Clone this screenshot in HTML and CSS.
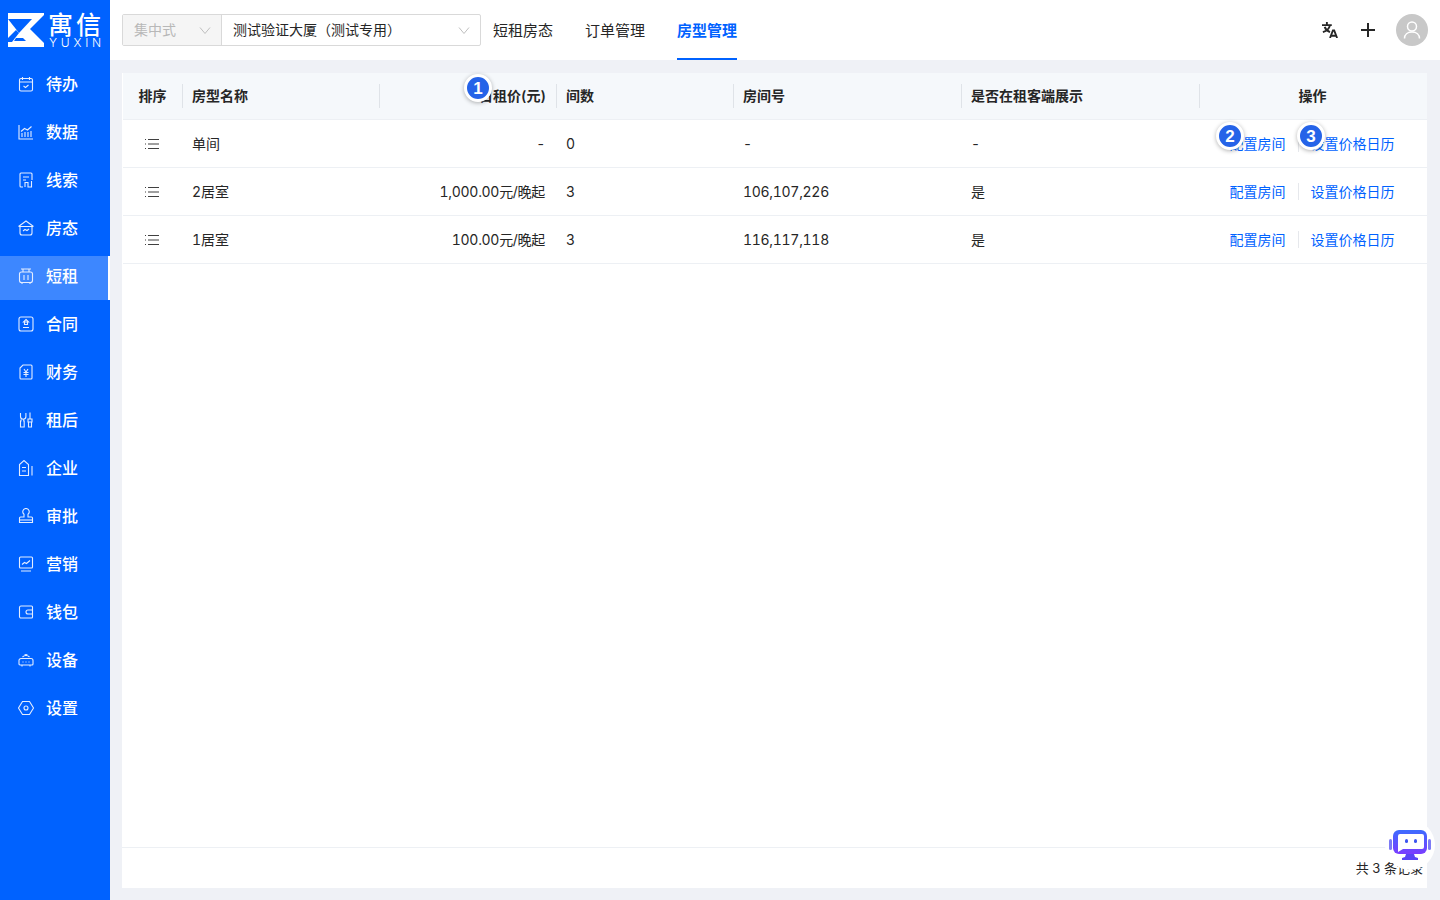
FILE: index.html
```html
<!DOCTYPE html>
<html lang="zh">
<head>
    <meta charset="UTF-8">
    <title>房型管理</title>
    <link rel="stylesheet" href="styles.css">
</head>
<body>
    <aside class="sidebar">
        <div class="logo">
            <svg class="logo-mark" width="36" height="34" viewBox="0 0 36 34">
                <rect width="36" height="34" fill="#fff"/>
                <path d="M0 6H24L11 20Z" fill="#0062ff"/>
                <path d="M0 9L8 17L0 25Z" fill="#fff"/>
                <path d="M0 25L8 17L11 20L4 29H0Z" fill="#0062ff"/>
                <path d="M36 2V30L22 16Z" fill="#0062ff"/>
                <path d="M8 25H15L18 28H6Z" fill="#0062ff"/>
            </svg>
            <div class="logo-text">
                <div class="logo-cn">寓信</div>
                <div class="logo-en">YUXIN</div>
            </div>
        </div>
        <nav class="menu">
            <a class="menu-item"><svg viewBox="0 0 16 16"><rect x="1.500" y="2.500" width="13" height="12.500" rx="1.500"/><path d="M1.500 6h13M4.500 1v3M11.500 1v3M5.500 10l2 1.500 3-2.500"/></svg>待办</a>
            <a class="menu-item"><svg viewBox="0 0 16 16"><path d="M1 1v14h14M4 13V9M7 13V8M10 13V8M13 13V7M3 7.500l3.500-3 3 1.500 4-3.500"/></svg>数据</a>
            <a class="menu-item"><svg viewBox="0 0 16 16"><path d="M5 15H3a1 1 0 0 1-1-1V2a1 1 0 0 1 1-1h10a1 1 0 0 1 1 1v6M5 5h6M5 8h3M7 15v-4.500h3V15h3.500V9"/></svg>线索</a>
            <a class="menu-item"><svg viewBox="0 0 16 16"><path d="M.5 6.500L8 1l7.500 5.500M2 6.500h12v6.500a2 2 0 0 1-2 2H4a2 2 0 0 1-2-2zM5 11l2-1.500 2 1 2-1.500"/></svg>房态</a>
            <a class="menu-item active"><svg viewBox="0 0 16 16"><path d="M3 1h10M5 1v3M11 1v3"/><rect x="1.500" y="4" width="13" height="10.500" rx="2"/><path d="M6 7v5M10 7v5M4 14.500V16M12 14.500V16"/></svg>短租</a>
            <a class="menu-item"><svg viewBox="0 0 16 16"><rect x="1" y="1" width="14" height="14" rx="2"/><path d="M8 3.500l2.500 2.500h-5zM6.500 6v2.500h3V6M5 11.500h6"/></svg>合同</a>
            <a class="menu-item"><svg viewBox="0 0 16 16"><path d="M5 1h8a1 1 0 0 1 1 1v12a1 1 0 0 1-1 1H3a1 1 0 0 1-1-1V4zM6 5l2 3 2-3M5.500 8.500h5M5.500 10.500h5M8 8v5"/></svg>财务</a>
            <a class="menu-item"><svg viewBox="0 0 16 16"><path d="M2.500 1v3.500a2.700 2.700 0 0 0 5.400 0V1M3 7.500V9h-.5v6h3.700V9h-.5V7.500M12 .5V7M10 7h4v3h-4zM10.500 10h3v5h-3z"/></svg>租后</a>
            <a class="menu-item"><svg viewBox="0 0 16 16"><path d="M1.500 15.500V4.500L6 .5l4.500 4v11zM4 7.500h4M4 11h4M14 6v9.500"/></svg>企业</a>
            <a class="menu-item"><svg viewBox="0 0 16 16"><path d="M8 .5a3.200 3.200 0 0 1 2 5.700V9h3.500a1 1 0 0 1 1 1v4.500h-13V10a1 1 0 0 1 1-1H6V6.200A3.200 3.200 0 0 1 8 .5z"/><path d="M1.500 12h13"/></svg>审批</a>
            <a class="menu-item"><svg viewBox="0 0 16 16"><rect x="1.500" y="1" width="13" height="11" rx="1"/><path d="M4 8.500l2.500-2 2 1 3.500-3M3 15h10"/></svg>营销</a>
            <a class="menu-item"><svg viewBox="0 0 16 16"><path d="M14.500 4.500V3a1 1 0 0 0-1-1H3a1.500 1.500 0 0 0-1.500 1.500v9A1.500 1.500 0 0 0 3 14h10.500a1 1 0 0 0 1-1V4.500z"/><path d="M14.500 6H10a2 2 0 0 0 0 4h4.500"/></svg>钱包</a>
            <a class="menu-item"><svg viewBox="0 0 16 16"><path d="M3 6.500h10a2 2 0 0 1 2 2V12a1 1 0 0 1-1 1H2a1 1 0 0 1-1-1V8.500a2 2 0 0 1 2-2zM4 13v1.500M12 13v1.500M4.500 10h1M7.500 10h1M10.500 10h1M4.500 5a5 5 0 0 1 7 0M6.500 3a3.500 3.500 0 0 1 3 0"/></svg>设备</a>
            <a class="menu-item"><svg viewBox="0 0 16 16"><path d="M4.500 1.500h7L15.500 8l-4 6.500h-7L.5 8z"/><circle cx="8" cy="8" r="2"/></svg>设置</a>
        </nav>
    </aside>

    <div class="main">
        <header class="topbar">
            <div class="picker">
                <div class="picker-type"><span>集中式</span><svg class="chev" viewBox="0 0 12 12"><path d="M1 3.500l5 6 5-6"/></svg></div>
                <div class="picker-building"><span>测试验证大厦（测试专用）</span><svg class="chev" viewBox="0 0 12 12"><path d="M1 3.500l5 6 5-6"/></svg></div>
            </div>
            <nav class="tabs">
                <a class="tab">短租房态</a>
                <a class="tab">订单管理</a>
                <a class="tab current">房型管理</a>
            </nav>
            <div class="top-actions">
                <svg class="translate-icon" width="16" height="16" viewBox="0 0 18 18" fill="none" stroke="#262626" stroke-width="2.100">
                    <path d="M0 3.500h11M5.500 0v3.500M9 3.500c-.8 3.800-3.400 6.500-8 8M3 5.500c1 2.800 3 4.800 6 6"/>
                    <path d="M9 18l3.300-8.500h1.400L17 18M10.300 15.500h5.400"/>
                </svg>
                <svg class="plus-icon" width="16" height="16" viewBox="0 0 16 16" stroke="#262626" stroke-width="2"><path d="M8 1v14M1 8h14"/></svg>
                <div class="avatar">
                    <svg width="20" height="20" viewBox="0 0 20 20" fill="none" stroke="#fff" stroke-width="1.500"><circle cx="10" cy="6.500" r="4.500"/><path d="M2.500 18.500c0-4 3-6.500 7.500-6.500s7.500 2.500 7.500 6.500"/></svg>
                </div>
            </div>
        </header>

        <section class="card">
            <table class="room-table">
                <colgroup>
                    <col class="c-sort"><col class="c-name"><col class="c-price"><col class="c-count"><col class="c-room"><col class="c-show"><col class="c-ops">
                </colgroup>
                <thead>
                    <tr>
                        <th class="center"><span class="th-in">排序</span></th>
                        <th><span class="th-in">房型名称</span></th>
                        <th class="right"><span class="th-in">日租价(元)</span></th>
                        <th><span class="th-in">间数</span></th>
                        <th><span class="th-in">房间号</span></th>
                        <th><span class="th-in">是否在租客端展示</span></th>
                        <th class="center"><span class="th-in last">操作</span></th>
                    </tr>
                </thead>
                <tbody>
                    <tr>
                        <td class="center"><svg class="drag" viewBox="0 0 14 10"><path d="M3 .5h11M3 5h11M3 9.500h11M0 .5h1M0 5h1M0 9.500h1"/></svg></td>
                        <td>单间</td>
                        <td class="right num">-</td>
                        <td>0</td>
                        <td class="num">-</td>
                        <td>-</td>
                        <td class="center ops"><a class="op">配置房间</a><a class="op">设置价格日历</a></td>
                    </tr>
                    <tr>
                        <td class="center"><svg class="drag" viewBox="0 0 14 10"><path d="M3 .5h11M3 5h11M3 9.500h11M0 .5h1M0 5h1M0 9.500h1"/></svg></td>
                        <td>2居室</td>
                        <td class="right num">1,000.00元/晚起</td>
                        <td>3</td>
                        <td class="num">106,107,226</td>
                        <td>是</td>
                        <td class="center ops"><a class="op">配置房间</a><a class="op">设置价格日历</a></td>
                    </tr>
                    <tr>
                        <td class="center"><svg class="drag" viewBox="0 0 14 10"><path d="M3 .5h11M3 5h11M3 9.500h11M0 .5h1M0 5h1M0 9.500h1"/></svg></td>
                        <td>1居室</td>
                        <td class="right num">100.00元/晚起</td>
                        <td>3</td>
                        <td class="num">116,117,118</td>
                        <td>是</td>
                        <td class="center ops"><a class="op">配置房间</a><a class="op">设置价格日历</a></td>
                    </tr>
                </tbody>
            </table>
            <footer class="pager">共 3 条记录</footer>
        </section>
    </div>

    <span class="step step-1">1</span>
    <span class="step step-2">2</span>
    <span class="step step-3">3</span>

    <div class="robot">
        <svg width="42" height="32" viewBox="0 0 42 32">
            <defs>
                <linearGradient id="robotFill" x1="0" y1="0" x2="0" y2="1">
                    <stop offset="0" stop-color="#3d6bff"/>
                    <stop offset="1" stop-color="#7a3dff"/>
                </linearGradient>
            </defs>
            <rect x="0" y="10" width="3" height="11" rx="1.500" fill="#7d7bf5"/>
            <rect x="39" y="10" width="3" height="11" rx="1.500" fill="#7d7bf5"/>
            <rect x="4" y="1" width="34" height="24" rx="6" fill="url(#robotFill)"/>
            <path d="M11 5h22a2 2 0 0 1 2 2v11a2 2 0 0 1-2 2H14l-5 3V7a2 2 0 0 1 2-2z" fill="#fff"/>
            <rect x="16" y="10" width="3" height="4" rx="1.500" fill="#3d55f0"/>
            <rect x="25" y="10" width="3" height="4" rx="1.500" fill="#3d55f0"/>
            <path d="M17 25h8l1 3 3 1v2H13v-2l3-1z" fill="#5a45f5"/>
        </svg>
    </div>
</body>
</html>
```

FILE: styles.css
```css
* {
    margin: 0;
    padding: 0;
    box-sizing: border-box;
}
html, body {
    height: 100%;
}
body {
    display: flex;
    height: 900px;
    overflow: hidden;
    background: #eff1f6;
    font-family: Inter, "Noto Sans CJK SC", sans-serif;
    font-size: 14px;
    color: #262626;
}
.sidebar {
    width: 110px;
    flex-shrink: 0;
    background: #0062ff;
    color: #fff;
}
.logo {
    height: 60px;
    display: flex;
    align-items: center;
    padding-left: 8px;
    gap: 4px;
}
.logo-mark {
    flex-shrink: 0;
}
.logo-cn {
    font-size: 25px;
    line-height: 24px;
    font-weight: 500;
    letter-spacing: 3px;
    white-space: nowrap;
}
.logo-en {
    font-size: 12px;
    line-height: 10px;
    letter-spacing: 3.800px;
    font-weight: 300;
    margin-top: 1px;
    padding-left: 1px;
}
.menu-item {
    height: 44px;
    margin-top: 4px;
    padding-bottom: 6px;
    display: flex;
    align-items: center;
    padding-left: 18px;
    gap: 12px;
    font-size: 16px;
    font-weight: 500;
}
.menu-item svg {
    width: 16px;
    height: 16px;
    margin-top: 2px;
    fill: none;
    stroke: #e4edff;
    stroke-width: 1.100;
}
.menu-item.active {
    background: #3d87ff;
    border-right: 2px solid #fff;
}
.main {
    flex: 1;
    min-width: 0;
    display: flex;
    flex-direction: column;
}
.topbar {
    height: 60px;
    background: #fff;
    display: flex;
    padding-left: 12px;
    padding-right: 12px;
    align-items: flex-start;
}
.picker {
    display: flex;
    margin-top: 14px;
    height: 32px;
    width: 359px;
    border: 1px solid #d9d9d9;
    border-radius: 2px;
}
.picker-type {
    width: 99px;
    background: #f5f5f5;
    color: #b8b8b8;
    border-right: 1px solid #d9d9d9;
    display: flex;
    align-items: center;
    justify-content: space-between;
    padding: 0 10px 0 11px;
}
.picker-building {
    flex: 1;
    display: flex;
    align-items: center;
    justify-content: space-between;
    padding: 0 10px 0 11px;
}
.picker span {
    position: relative;
    top: -1px;
}
.chev {
    width: 12px;
    height: 12px;
    fill: none;
    stroke: #bfbfbf;
    stroke-width: 1;
}
.tabs {
    display: flex;
    margin-left: 12px;
    gap: 32px;
}
.tab {
    height: 60px;
    line-height: 60px;
    padding-top: 1px;
    font-size: 15px;
}
.tab.current {
    color: #0062ff;
    font-weight: 600;
    border-bottom: 2px solid #0062ff;
}
.top-actions {
    margin-left: auto;
    display: flex;
    align-items: center;
    height: 60px;
}
.translate-icon {
    margin-right: 22px;
}
.plus-icon {
    margin-right: 20px;
}
.avatar {
    width: 32px;
    height: 32px;
    border-radius: 50%;
    background: #c8c8c8;
    display: flex;
    align-items: center;
    justify-content: center;
}
.card {
    margin: 13px 13px 12px 12px;
    flex: 1;
    background: #fff;
    display: flex;
    flex-direction: column;
}
.room-table {
    width: 1304px;
    margin-left: 1px;
    border-collapse: collapse;
    table-layout: fixed;
    font-variant-numeric: tabular-nums;
}
.c-sort { width: 60px; }
.c-name { width: 197px; }
.c-price { width: 177px; }
.c-count { width: 177px; }
.c-room { width: 228px; }
.c-show { width: 238px; }
.c-ops { width: 227px; }
th {
    height: 46px;
    background: #f5f8fb;
    border-bottom: 1px solid #edf0f4;
    font-weight: 600;
    font-size: 14px;
    text-align: left;
    padding: 0;
}
.th-in {
    display: block;
    line-height: 24px;
    padding: 0 9px;
    border-right: 1px solid #dfe3e8;
}
.th-in.last {
    border-right: none;
    padding-right: 11px;
}
td {
    height: 48px;
    padding: 0 9px;
    font-size: 14px;
    border-bottom: 1px solid #edf0f4;
}
td:first-child {
    padding-right: 11px;
}
td.num {
    letter-spacing: -0.3px;
}
.center {
    text-align: center;
}
.right {
    text-align: right;
}
th.right .th-in {
    padding-right: 10px;
}
td.right {
    padding-right: 12px;
}
td.ops {
    padding-right: 12px;
}
.drag {
    display: block;
    width: 14px;
    height: 10px;
    margin: 2px auto 0;
    fill: none;
    stroke: #404040;
    stroke-width: 1;
}
.op {
    color: #0062ff;
    padding: 0 12px;
    font-size: 14px;
}
.op + .op {
    border-left: 1px solid #e6e8ec;
}
.pager {
    margin-top: auto;
    height: 41px;
    padding-bottom: 2px;
    border-top: 1px solid #edf0f4;
    display: flex;
    align-items: center;
    justify-content: flex-end;
    padding-right: 4px;
    font-size: 13px;
}
.step {
    position: absolute;
    width: 28px;
    height: 28px;
    padding-top: 1px;
    border-radius: 50%;
    background: #2563e8;
    border: 3px solid #fff;
    box-shadow: 0 1px 4px rgba(0, 0, 0, 0.3);
    color: #fff;
    font-weight: 700;
    font-size: 17px;
    font-family: "Liberation Sans", sans-serif;
    display: flex;
    align-items: center;
    justify-content: center;
}
.step-1 { left: 464px; top: 74px; }
.step-2 { left: 1216px; top: 122px; }
.step-3 { left: 1297px; top: 122px; }
.robot {
    position: absolute;
    left: 1385px;
    top: 820px;
    width: 50px;
    height: 50px;
    border-radius: 50%;
    background: #fff;
    display: flex;
    align-items: center;
    justify-content: center;
}
```
